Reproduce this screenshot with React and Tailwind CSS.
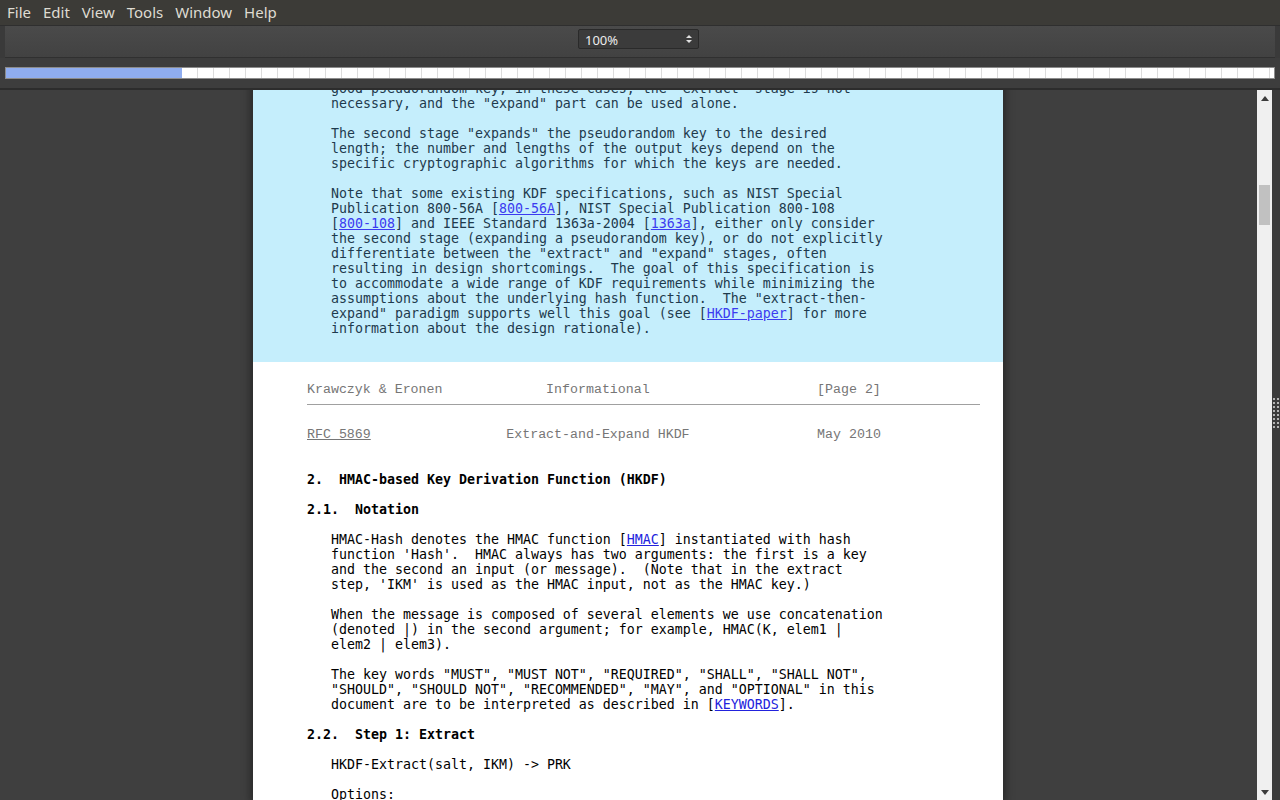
import React from "react";

const mono = { fontFamily: '"DejaVu Sans Mono", monospace' };

function A({ children, className = "text-[#3b3bf0]" }) {
  return <span className={`underline ${className}`}>{children}</span>;
}

function Line({ children, bold }) {
  return (
    <div className={`h-[15px] leading-[15px] whitespace-pre ${bold ? "font-bold" : ""}`}>
      {children === undefined ? " " : children}
    </div>
  );
}

function ScrollBar() {
  return (
    <div className="w-[15px] bg-[#f0f0f0] flex flex-col items-center">
      <div className="pt-[6px] h-[95px]">
        <div className="w-0 h-0 border-l-[4px] border-r-[4px] border-b-[5px] border-l-transparent border-r-transparent border-b-[#3c3c3c]" />
      </div>
      <div className="w-[11px] h-[40px] bg-[#c1c1c1]" />
      <div className="flex-1" />
      <div className="pb-[5px]">
        <div className="w-0 h-0 border-l-[4px] border-r-[4px] border-t-[5px] border-l-transparent border-r-transparent border-t-[#3c3c3c]" />
      </div>
    </div>
  );
}

function Grip() {
  return (
    <div className="w-[8px] bg-[#3c3c3c] flex flex-col items-center pt-[308px] gap-[2px]">
      {Array.from({ length: 8 }).map((_, i) => (
        <div key={i} className="flex gap-[2px]">
          <div className="w-[2px] h-[2px] bg-[#b5b5b5]" />
          <div className="w-[2px] h-[2px] bg-[#b5b5b5]" />
        </div>
      ))}
    </div>
  );
}

const grey = { fontFamily: '"Liberation Mono", monospace' };

export default function App() {
  const menus = ["File", "Edit", "View", "Tools", "Window", "Help"];
  return (
    <div className="w-[1280px] h-[800px] overflow-hidden flex flex-col bg-[#3f3f3f]">
      {/* menu bar */}
      <div
        className="h-[25px] bg-[#3c3b37] flex items-center pl-[7px] gap-[12px] text-[15px] text-[#dfdbd2]"
        style={{ fontFamily: '"Noto Sans", sans-serif' }}
      >
        {menus.map((m) => (
          <span key={m}>{m}</span>
        ))}
      </div>

      {/* toolbar */}
      <div className="h-[33px] bg-[#3a3a3a] border-t border-[#2f2f2f] px-[5px] flex">
        <div className="flex-1 bg-gradient-to-b from-[#4a4a4a] to-[#424242] border-b border-[#303030] flex justify-center items-start pt-[3px]">
          <div
            className="mr-[3px] w-[121px] h-[20px] bg-[#3b3b3b] border border-[#2a2a2a] rounded-[2px] flex items-center justify-between pl-[6px] pr-[6px] text-[13px] text-[#ececec]"
            style={{ fontFamily: '"Noto Sans", sans-serif' }}
          >
            <span className="pt-[4px]">100%</span>
            <span className="flex flex-col items-center gap-[2px]">
              <span className="w-0 h-0 border-l-[3px] border-r-[3px] border-b-[3px] border-l-transparent border-r-transparent border-b-[#e0e0e0]" />
              <span className="w-0 h-0 border-l-[3px] border-r-[3px] border-t-[3px] border-l-transparent border-r-transparent border-t-[#e0e0e0]" />
            </span>
          </div>
        </div>
      </div>

      {/* progress row */}
      <div className="h-[32px] bg-[#3d3d3d] border-b-2 border-[#2c2c2c] px-[5px] pt-[9px]">
        <div className="h-[12px] border border-[#8c8c8c] flex bg-white">
          <div className="w-[176px] h-full bg-[#8fadf0]" />
          <div className="flex-1 h-full bg-[repeating-linear-gradient(90deg,#ffffff_0,#ffffff_15px,#dcdcdc_15px,#dcdcdc_16px)]" />
        </div>
      </div>

      {/* content */}
      <div className="flex-1 flex overflow-hidden">
        <div className="flex-1 flex pl-[253px] overflow-hidden">
          <div
            className="w-[750px] bg-white -mt-[9px] shadow-[0_0_8px_3px_rgba(0,0,0,0.35)] text-[13.29px] text-black"
            style={mono}
          >
            <div className="bg-[#c5eefc] text-[#1e3a4d] pl-[54px] pb-[26px]">
              <Line>{`   good pseudorandom key; in these cases, the "extract" stage is not`}</Line>
              <Line>{`   necessary, and the "expand" part can be used alone.`}</Line>
              <Line />
              <Line>{`   The second stage "expands" the pseudorandom key to the desired`}</Line>
              <Line>{`   length; the number and lengths of the output keys depend on the`}</Line>
              <Line>{`   specific cryptographic algorithms for which the keys are needed.`}</Line>
              <Line />
              <Line>{`   Note that some existing KDF specifications, such as NIST Special`}</Line>
              <Line>
                {`   Publication 800-56A [`}
                <A>800-56A</A>
                {`], NIST Special Publication 800-108`}
              </Line>
              <Line>
                {`   [`}
                <A>800-108</A>
                {`] and IEEE Standard 1363a-2004 [`}
                <A>1363a</A>
                {`], either only consider`}
              </Line>
              <Line>{`   the second stage (expanding a pseudorandom key), or do not explicitly`}</Line>
              <Line>{`   differentiate between the "extract" and "expand" stages, often`}</Line>
              <Line>{`   resulting in design shortcomings.  The goal of this specification is`}</Line>
              <Line>{`   to accommodate a wide range of KDF requirements while minimizing the`}</Line>
              <Line>{`   assumptions about the underlying hash function.  The "extract-then-`}</Line>
              <Line>
                {`   expand" paradigm supports well this goal (see [`}
                <A>HKDF-paper</A>
                {`] for more`}
              </Line>
              <Line>{`   information about the design rationale).`}</Line>
            </div>

            <div className="pl-[54px] pr-[23px] pt-[20px]">
              <div className="h-[15px] leading-[15px] whitespace-pre text-[#767676]" style={grey}>
                {`Krawczyk & Eronen             Informational                     [Page 2]`}
              </div>
              <div className="mt-[7px] h-[1px] bg-[#a0a0a0]" />
              <div className="mt-[22px] h-[15px] leading-[15px] whitespace-pre text-[#767676]" style={grey}>
                <span className="underline">RFC 5869</span>
                {`                 Extract-and-Expand HKDF                May 2010`}
              </div>
              <Line />
              <Line />
              <Line bold>{`2.  HMAC-based Key Derivation Function (HKDF)`}</Line>
              <Line />
              <Line bold>{`2.1.  Notation`}</Line>
              <Line />
              <Line>
                {`   HMAC-Hash denotes the HMAC function [`}
                <A className="text-[#2222dd]">HMAC</A>
                {`] instantiated with hash`}
              </Line>
              <Line>{`   function 'Hash'.  HMAC always has two arguments: the first is a key`}</Line>
              <Line>{`   and the second an input (or message).  (Note that in the extract`}</Line>
              <Line>{`   step, 'IKM' is used as the HMAC input, not as the HMAC key.)`}</Line>
              <Line />
              <Line>{`   When the message is composed of several elements we use concatenation`}</Line>
              <Line>{`   (denoted |) in the second argument; for example, HMAC(K, elem1 |`}</Line>
              <Line>{`   elem2 | elem3).`}</Line>
              <Line />
              <Line>{`   The key words "MUST", "MUST NOT", "REQUIRED", "SHALL", "SHALL NOT",`}</Line>
              <Line>{`   "SHOULD", "SHOULD NOT", "RECOMMENDED", "MAY", and "OPTIONAL" in this`}</Line>
              <Line>
                {`   document are to be interpreted as described in [`}
                <A className="text-[#2222dd]">KEYWORDS</A>
                {`].`}
              </Line>
              <Line />
              <Line bold>{`2.2.  Step 1: Extract`}</Line>
              <Line />
              <Line>{`   HKDF-Extract(salt, IKM) -> PRK`}</Line>
              <Line />
              <Line>{`   Options:`}</Line>
              <Line>{`      Hash     a hash function; HashLen denotes the length of the`}</Line>
            </div>
          </div>
        </div>
        <ScrollBar />
        <Grip />
      </div>
    </div>
  );
}
